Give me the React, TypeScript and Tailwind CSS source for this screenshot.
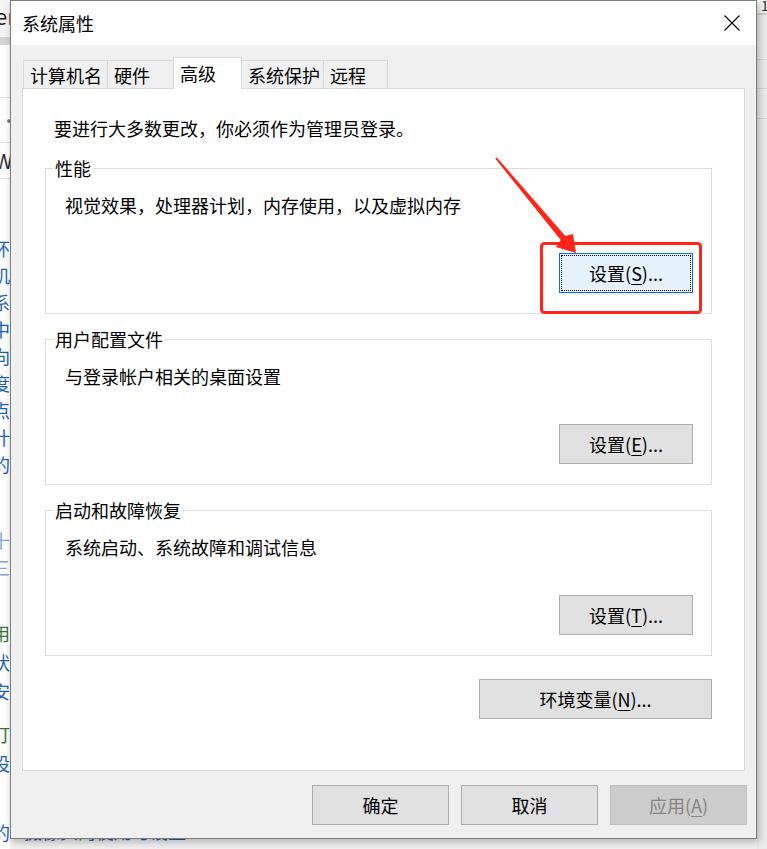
import React from 'react';

const font = "font-['Noto_Sans_CJK_SC','Microsoft_YaHei',sans-serif]";

// fragments of the window behind the dialog, left edge
const BackgroundLeft = () => {
  return (
    <div className="flex h-[849px] w-[10px] shrink-0 flex-col overflow-hidden bg-white text-[18px] leading-[27px]">
      <div className="h-[37px] -ml-[5px] whitespace-nowrap bg-[#f4f4f4] text-[22px] leading-[30px] text-[#222]">
        e<span className="text-[#c4302b]">r</span>
      </div>
      <div className="h-[8px] bg-[#d4d4d4]" />
      <div className="h-[52px]" />
      <div className="h-px bg-[#e2e2e2]" />
      <div className="h-[44px] leading-[44px] text-[#777]">·</div>
      <div className="h-px bg-[#e2e2e2]" />
      <div className="h-[35px] -ml-[5px] text-[20px] leading-[35px] text-[#1f2937]">W</div>
      <div className="h-px bg-[#e2e2e2]" />
      <div className="h-[56px]" />
      <div className="-ml-[8px] flex flex-col whitespace-nowrap text-[#1c5fb8]">
        <div className="h-[27px]">环境</div>
        <div className="h-[27px]">机器</div>
        <div className="h-[27px]">系统</div>
        <div className="h-[27px]">中心</div>
        <div className="h-[27px]">向导</div>
        <div className="h-[27px]">度量</div>
        <div className="h-[27px]">点击</div>
        <div className="h-[27px]">计算</div>
        <div className="h-[27px]">的目</div>
        <div className="h-[27px]">，同</div>
        <div className="h-[22px]" />
        <div className="h-[27px] text-[#7fa6d8]">十</div>
        <div className="h-[27px] text-[#7fa6d8]">三</div>
        <div className="h-[38px]" />
        <div className="h-[29px] leading-[29px] text-[#2f7a2f]">用户</div>
        <div className="h-[29px] leading-[29px]">状态</div>
        <div className="h-[29px] leading-[29px]">安全</div>
        <div className="h-[14px]" />
        <div className="h-[29px] leading-[29px] text-[#2f7a2f]">打印</div>
        <div className="h-[29px] leading-[29px]">设备</div>
        <div className="h-[40px]" />
        <div className="h-[29px] leading-[29px]">的是</div>
      </div>
    </div>
  );
};

// fragments of the window behind the dialog, right edge
const BackgroundRight = () => {
  return (
    <div className="flex h-[849px] w-[10px] shrink-0 flex-col overflow-hidden bg-[#ececec]">
      <div className="h-[13px] bg-[#f6f6f6] pl-[4px] text-[14px] leading-[10px] text-[#3b2a1a]">1</div>
      <div className="h-[2px] bg-[#cfcfcf]" />
      <div className="h-[44px]" />
      <div className="h-px bg-[#d6d6d6]" />
      <div className="h-[28px]" />
      <div className="h-px bg-[#d6d6d6]" />
      <div className="h-[29px]" />
      <div className="h-px bg-[#d6d6d6]" />
    </div>
  );
};

const Mnemonic = ({ children }: { children: React.ReactNode }) => (
  <span className="underline decoration-1 underline-offset-[3px]">{children}</span>
);

type BtnProps = {
  children: React.ReactNode;
  className?: string;
  focused?: boolean;
  disabled?: boolean;
};

const WinButton = ({ children, className = '', focused, disabled }: BtnProps) => {
  const look = disabled
    ? 'border-[#bfbfbf] bg-[#cccccc] text-[#838383]'
    : focused
      ? 'border-[#0078d7] bg-[#e5f1fb] text-black outline-1 outline-dotted outline-black outline-offset-[-3px]'
      : 'border-[#adadad] bg-[#e1e1e1] text-black';
  return (
    <button
      type="button"
      className={`flex h-[40px] shrink-0 items-center justify-center border text-[18px] leading-[24px] ${look} ${className}`}
    >
      {children}
    </button>
  );
};

type GroupProps = {
  title: string;
  text: string;
  button: React.ReactNode;
  focused?: boolean;
  className?: string;
};

const GroupBox = ({ title, text, button, focused, className = '' }: GroupProps) => {
  return (
    <fieldset className={`ml-[22px] mr-[32px] border border-[#dcdcdc] ${className}`}>
      <legend className="ml-[7px] px-[2px] text-[18px] leading-[24px]">{title}</legend>
      <div className="mt-[13px] pl-[19px] text-[18px] leading-[24px]">{text}</div>
      <div className="mb-[20px] mt-[36px] flex justify-end pr-[18px]">
        <WinButton className="w-[134px]" focused={focused}>
          {button}
        </WinButton>
      </div>
    </fieldset>
  );
};

const tabs = [
  { label: '计算机名', width: 'w-[85px]' },
  { label: '硬件', width: 'w-[67px]' },
  { label: '高级', width: 'w-[69px]', active: true },
  { label: '系统保护', width: 'w-[83px]' },
  { label: '远程', width: 'w-[65px]' },
];

const Dialog = () => {
  return (
    <div className="relative z-10 flex h-[839px] w-[747px] flex-col border border-[#7d7d7d] bg-[#f0f0f0] shadow-[2px_3px_8px_rgba(0,0,0,0.28)]">
      {/* title bar */}
      <div className="flex h-[44px] shrink-0 items-center justify-between bg-white pl-[11px] pr-[16px]">
        <span className="text-[18px] leading-[24px] text-black">系统属性</span>
        <svg width="16" height="16" viewBox="0 0 16 16" className="text-black">
          <path d="M0.5 0.5 L15.5 15.5 M15.5 0.5 L0.5 15.5" stroke="currentColor" strokeWidth="1.1" fill="none" />
        </svg>
      </div>

      <div className="flex flex-1 flex-col px-[11px] pt-[12px]">
        {/* tabs */}
        <div className="flex h-[31px] items-end pl-px">
          {tabs.map((tab, i) =>
            tab.active ? (
              <div
                key={tab.label}
                className={`relative z-10 -mb-px flex h-[32px] items-start border border-b-0 border-[#d9d9d9] bg-white pl-[6px] pt-[3px] text-[18px] leading-[24px] ${tab.width} ${i > 0 ? '-ml-px' : ''}`}
              >
                {tab.label}
              </div>
            ) : (
              <div
                key={tab.label}
                className={`flex h-[28px] items-center border border-b-0 border-[#d9d9d9] pl-[6px] text-[18px] leading-[24px] ${tab.width} ${i > 0 ? '-ml-px' : ''}`}
              >
                {tab.label}
              </div>
            )
          )}
        </div>

        {/* tab page */}
        <div className="flex h-[683px] flex-col border border-[#d9d9d9] bg-white pt-[27px]">
          <p className="pl-[31px] text-[18px] leading-[24px]">要进行大多数更改，你必须作为管理员登录。</p>

          <GroupBox
            className="mt-[16px]"
            title="性能"
            text="视觉效果，处理器计划，内存使用，以及虚拟内存"
            focused
            button={<>设置(<Mnemonic>S</Mnemonic>)...</>}
          />
          <GroupBox
            className="mt-[13px]"
            title="用户配置文件"
            text="与登录帐户相关的桌面设置"
            button={<>设置(<Mnemonic>E</Mnemonic>)...</>}
          />
          <GroupBox
            className="mt-[13px]"
            title="启动和故障恢复"
            text="系统启动、系统故障和调试信息"
            button={<>设置(<Mnemonic>T</Mnemonic>)...</>}
          />

          <div className="mt-[23px] flex justify-end pr-[32px]">
            <WinButton className="w-[233px]">
              环境变量(<Mnemonic>N</Mnemonic>)...
            </WinButton>
          </div>
        </div>

        {/* dialog buttons */}
        <div className="-mr-[2px] mt-[14px] flex justify-end gap-[12px]">
          <WinButton className="w-[137px]">确定</WinButton>
          <WinButton className="w-[137px]">取消</WinButton>
          <WinButton className="w-[137px]" disabled>
            应用(<Mnemonic>A</Mnemonic>)
          </WinButton>
        </div>
      </div>
    </div>
  );
};

const App = () => {
  return (
    <div className={`relative flex h-[849px] w-[767px] overflow-hidden bg-[#ececec] text-black ${font}`}>
      <BackgroundLeft />
      <div className="flex shrink-0 flex-col">
        <Dialog />
        <div className="flow-root h-[10px] overflow-hidden bg-[#f2f2f2]">
          <div className="-mt-[17px] whitespace-nowrap pl-[14px] text-[18px] leading-[18px] text-[#1c5fb8]">
            摄像头的使用与设置
          </div>
        </div>
      </div>
      <BackgroundRight />

      {/* red annotation drawn over the screenshot */}
      <svg className="pointer-events-none absolute inset-0 z-20" width="767" height="849" viewBox="0 0 767 849">
        <rect x="541.5" y="243.5" width="159" height="69" rx="3" fill="none" stroke="#ff2318" strokeWidth="3" />
        <polygon
          points="496.8,157.4 565.3,236.1 573,234 576,253 556,247 560.7,239.9 495.2,158.6"
          fill="#ff2318"
        />
      </svg>
    </div>
  );
};

export default App;
